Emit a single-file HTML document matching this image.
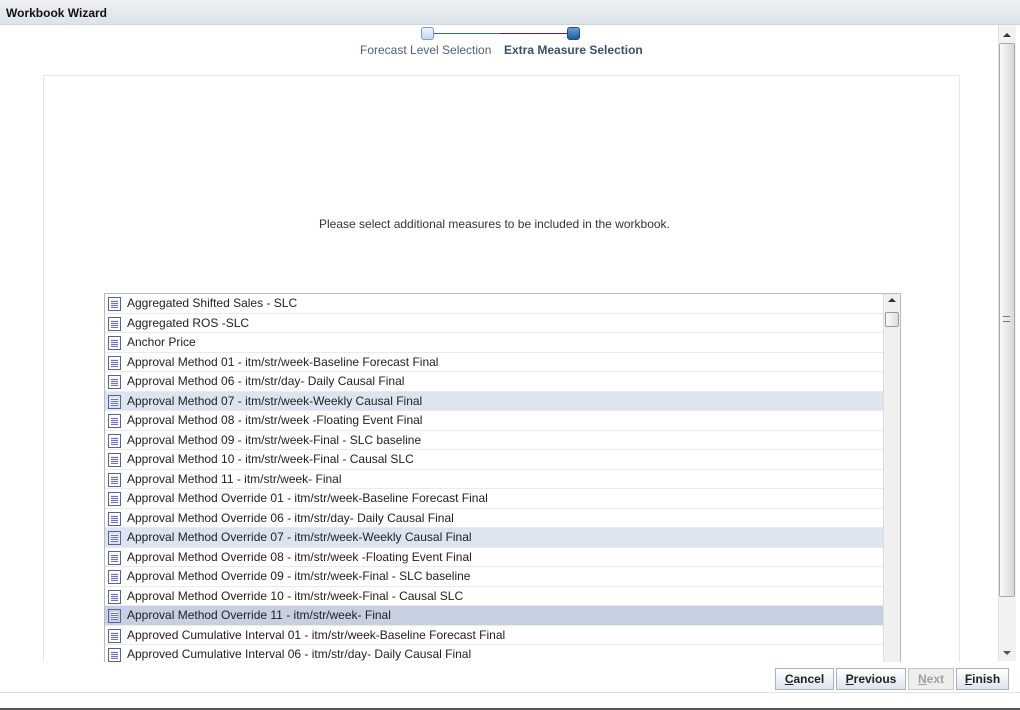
<!DOCTYPE html>
<html><head><style>
*{margin:0;padding:0;box-sizing:border-box}
body{width:1020px;height:710px;overflow:hidden;background:#fff;font-family:"Liberation Sans",Arial,sans-serif;font-size:12px;color:#222;position:relative}
.hdr{position:absolute;left:0;top:0;width:1020px;height:25px;background:linear-gradient(#eef1f4,#dde3e8);border-bottom:1px solid #d0d6dc}
.hdr b{position:absolute;left:6px;top:6px;font-size:12px;color:#111}
.abs{position:absolute}
.panel{position:absolute;left:43px;top:75px;width:917px;height:600px;border:1px solid #e6e6e6}
.list{position:absolute;left:104px;top:293px;width:797px;height:380px;border:1px solid #b8bcc0;overflow:hidden}
.row{position:relative;height:19.5px;border-bottom:1px solid #e9ecee;width:778px;line-height:18px;padding-left:22px;white-space:nowrap}
.row.s{background:#dbe4ef}.row.d{background:#c6d0e0}
.ic{position:absolute;left:3px;top:3px;width:13px;height:14px;border:1px solid #5a5f9e;background:repeating-linear-gradient(#eef0ff 0 1px,#6d73b8 1px 2px);background-clip:content-box;padding:2px 2px;background-color:#fff}
.vs{position:absolute;right:0;top:0;width:17px;height:100%;background:#f0f0f0;border-left:1px solid #ddd}
.btn{position:absolute;top:668px;height:22px;border:1px solid #a9b3c0;background:linear-gradient(#fff,#dde4ee);font-weight:bold;font-size:12px;line-height:20px;text-align:center;color:#222}
.btn u{text-decoration:underline}
</style></head><body>
<div class="hdr"><b>Workbook Wizard</b></div>
<div class="abs" style="left:427px;top:33px;width:146px;height:1px;background:#3a5ea8"></div>
<div class="abs" style="left:500px;top:33px;width:73px;height:1px;background:#6a1a6a"></div>
<div class="abs" style="left:421px;top:27px;width:13px;height:13px;border:1px solid #7d9ccc;border-radius:3px;background:linear-gradient(#eef3fb,#c6d6ef)"></div>
<div class="abs" style="left:567px;top:27px;width:13px;height:13px;border:1px solid #1d4f86;border-radius:3px;background:linear-gradient(#6c9dd0,#1d5c9c)"></div>
<div class="abs" style="left:360px;top:43px;color:#50607a">Forecast Level Selection</div>
<div class="abs" style="left:504px;top:43px;color:#3b4f6b;font-weight:bold">Extra Measure Selection</div>
<div class="panel"></div>
<div class="abs" style="left:319px;top:217px;color:#333">Please select additional measures to be included in the workbook.</div>
<div class="list">
<div class="row"><i class="ic"></i>Aggregated Shifted Sales - SLC</div>
<div class="row"><i class="ic"></i>Aggregated ROS -SLC</div>
<div class="row"><i class="ic"></i>Anchor Price</div>
<div class="row"><i class="ic"></i>Approval Method 01 - itm/str/week-Baseline Forecast Final</div>
<div class="row"><i class="ic"></i>Approval Method 06 - itm/str/day- Daily Causal Final</div>
<div class="row s"><i class="ic"></i>Approval Method 07 - itm/str/week-Weekly Causal Final</div>
<div class="row"><i class="ic"></i>Approval Method 08 - itm/str/week -Floating Event Final</div>
<div class="row"><i class="ic"></i>Approval Method 09 - itm/str/week-Final - SLC baseline</div>
<div class="row"><i class="ic"></i>Approval Method 10 - itm/str/week-Final - Causal SLC</div>
<div class="row"><i class="ic"></i>Approval Method 11 - itm/str/week- Final</div>
<div class="row"><i class="ic"></i>Approval Method Override 01 - itm/str/week-Baseline Forecast Final</div>
<div class="row"><i class="ic"></i>Approval Method Override 06 - itm/str/day- Daily Causal Final</div>
<div class="row s"><i class="ic"></i>Approval Method Override 07 - itm/str/week-Weekly Causal Final</div>
<div class="row"><i class="ic"></i>Approval Method Override 08 - itm/str/week -Floating Event Final</div>
<div class="row"><i class="ic"></i>Approval Method Override 09 - itm/str/week-Final - SLC baseline</div>
<div class="row"><i class="ic"></i>Approval Method Override 10 - itm/str/week-Final - Causal SLC</div>
<div class="row d"><i class="ic"></i>Approval Method Override 11 - itm/str/week- Final</div>
<div class="row"><i class="ic"></i>Approved Cumulative Interval 01 - itm/str/week-Baseline Forecast Final</div>
<div class="row"><i class="ic"></i>Approved Cumulative Interval 06 - itm/str/day- Daily Causal Final</div>
<div class="row"><i class="ic"></i>Approved Cumulative Interval 07</div>
<div class="vs"><div style="position:absolute;left:4px;top:4px;width:0;height:0;border:4px solid transparent;border-bottom-color:#333;border-top:0"></div><div style="position:absolute;left:1px;top:18px;width:14px;height:15px;border:1px solid #999;border-radius:2px;background:linear-gradient(90deg,#fafafa,#ddd)"></div></div>
</div>
<div class="abs" style="left:0;top:662px;width:998px;height:30px;background:#fff"></div>
<div class="abs" style="left:998px;top:25px;width:18px;height:636px;background:#f2f2f2;border-left:1px solid #e0e0e0"></div>
<div class="abs" style="left:1003px;top:33px;width:0;height:0;border:4px solid transparent;border-bottom-color:#333;border-top:0"></div>
<div class="abs" style="left:999px;top:43px;width:16px;height:554px;border:1px solid #aaa;border-radius:2px;background:linear-gradient(90deg,#fafafa,#d8d8d8)"></div>
<div class="abs" style="left:1003px;top:316px;width:7px;height:6px;border-top:1px solid #777;border-bottom:1px solid #777"></div>
<div class="abs" style="left:1003px;top:651px;width:0;height:0;border:4px solid transparent;border-top-color:#555;border-bottom:0"></div>
<div class="btn" style="left:775px;width:59px"><u>C</u>ancel</div>
<div class="btn" style="left:836px;width:70px"><u>P</u>revious</div>
<div class="btn" style="left:908px;width:46px;background:#eee;border-color:#c8c8c8;color:#a0a0a0"><u>N</u>ext</div>
<div class="btn" style="left:956px;width:53px"><u>F</u>inish</div>
<div class="abs" style="left:0;top:692px;width:1020px;height:1px;background:#e2e2e2"></div>
<div class="abs" style="left:0;top:708px;width:1020px;height:2px;background:#555"></div>
</body></html>
